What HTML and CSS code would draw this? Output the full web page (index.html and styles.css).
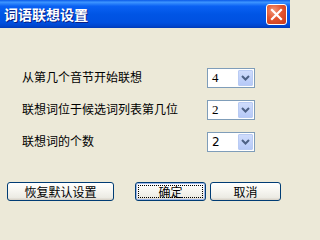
FILE: index.html
```html
<!DOCTYPE html>
<html lang="zh-CN">
<head>
<meta charset="utf-8">
<title>词语联想设置</title>
<link rel="stylesheet" href="styles.css">
</head>
<body>
<div class="window">
  <div class="titlebar">
    <span class="title">词语联想设置</span>
    <div class="close" aria-label="关闭">
      <svg width="13" height="13" viewBox="0 0 13 13"><path d="M2 2 L11 11 M11 2 L2 11" stroke="#fff" stroke-width="2.2" stroke-linecap="square"/></svg>
    </div>
  </div>
  <div class="content">
    <div class="rows">
      <div class="row">
        <span class="label">从第几个音节开始联想</span>
        <div class="combo"><span class="value serif">4</span><span class="drop"><svg width="9" height="6" viewBox="0 0 9 6"><path d="M1 1 L4.5 4.5 L8 1" fill="none" stroke="#4d6185" stroke-width="2"/></svg></span></div>
      </div>
      <div class="row">
        <span class="label">联想词位于候选词列表第几位</span>
        <div class="combo"><span class="value serif">2</span><span class="drop"><svg width="9" height="6" viewBox="0 0 9 6"><path d="M1 1 L4.5 4.5 L8 1" fill="none" stroke="#4d6185" stroke-width="2"/></svg></span></div>
      </div>
      <div class="row">
        <span class="label">联想词的个数</span>
        <div class="combo"><span class="value">2</span><span class="drop"><svg width="9" height="6" viewBox="0 0 9 6"><path d="M1 1 L4.5 4.5 L8 1" fill="none" stroke="#4d6185" stroke-width="2"/></svg></span></div>
      </div>
    </div>
    <div class="buttons">
      <button class="btn wide">恢复默认设置</button>
      <div class="right">
        <button class="btn default"><span class="focus">确定</span></button>
        <button class="btn">取消</button>
      </div>
    </div>
  </div>
</div>
</body>
</html>
```

FILE: styles.css
```css
html, body {
  margin: 0;
  padding: 0;
  background: #ece9d8;
}
.window {
  width: 290px;
  height: 209px;
  display: flex;
  flex-direction: column;
  background: #ece9d8;
  font-family: "Noto Sans CJK SC", "Noto Sans", sans-serif;
  font-size: 12px;
  color: #000;
  overflow: hidden;
}
.titlebar {
  height: 28px;
  flex: none;
  display: flex;
  align-items: center;
  justify-content: space-between;
  padding: 0 3px 0 4px;
  box-sizing: border-box;
  background: linear-gradient(#0a5ae8 0%, #3d95ff 8%, #0a61f3 22%, #0055e5 50%, #0050e0 80%, #0046cf 92%, #003ab8 100%);
}
.title {
  color: #fff;
  font-weight: bold;
  font-size: 14px;
  line-height: 16px;
  text-shadow: 1px 1px 0 #0a1e84;
  letter-spacing: 0;
}
.close {
  width: 21px;
  height: 21px;
  box-sizing: border-box;
  border: 1px solid #fff;
  border-radius: 3px;
  background: radial-gradient(circle at 35% 30%, #f2987a 0%, #e2552f 45%, #c8381a 100%);
  display: flex;
  align-items: center;
  justify-content: center;
}
.content {
  flex: 1;
  display: flex;
  flex-direction: column;
  justify-content: space-between;
  padding: 40px 9px 8px 7px;
}
.rows {
  display: flex;
  flex-direction: column;
  gap: 12px;
  padding-left: 15px;
}
.row {
  display: grid;
  grid-template-columns: 185px 48px;
  align-items: center;
  height: 20px;
}
.label {
  line-height: 16px;
  margin-top: -3px;
}
.combo {
  height: 20px;
  box-sizing: border-box;
  border: 1px solid #7f9db9;
  background: #fff;
  display: flex;
  align-items: center;
  justify-content: space-between;
  padding: 1px;
}
.value {
  padding-left: 3px;
  font-family: "DejaVu Sans", sans-serif;
  font-size: 12px;
  line-height: 16px;
}
.value.serif {
  font-family: "Liberation Serif", serif;
  font-size: 13px;
}
.drop {
  width: 15px;
  height: 16px;
  box-sizing: border-box;
  border: 1px solid #b9cbf3;
  border-radius: 1px;
  background: linear-gradient(#cfdcfc, #b6c9f7);
  display: flex;
  align-items: center;
  justify-content: center;
}
.buttons {
  display: flex;
  justify-content: space-between;
  align-items: center;
}
.right {
  display: flex;
  gap: 4px;
}
.btn {
  height: 19px;
  width: 71px;
  padding: 0;
  box-sizing: border-box;
  border: 1px solid #003c74;
  border-radius: 3px;
  background: linear-gradient(#ffffff 0%, #f8f7f2 40%, #ecebe4 85%, #d6d0c5 100%);
  font-family: "Noto Sans CJK SC", "Noto Sans", sans-serif;
  font-size: 12px;
  line-height: 15px;
  color: #000;
  display: flex;
  align-items: center;
  justify-content: center;
}
.btn.wide {
  width: 107px;
}
.btn.default {
  box-shadow: inset 0 0 0 1px #9fb6e8;
  padding: 2px;
}
.focus {
  flex: 1;
  align-self: stretch;
  border: 1px dotted #000;
  display: flex;
  align-items: center;
  justify-content: center;
}
```
